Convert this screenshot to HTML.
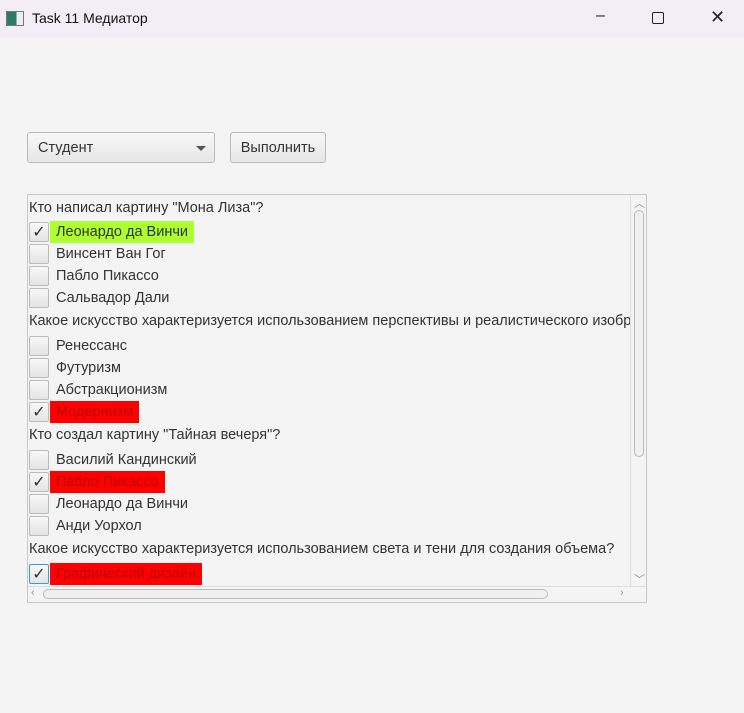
<!DOCTYPE html>
<html><head><meta charset="utf-8"><style>
body{margin:0;width:744px;height:713px;background:#f4f4f4;font-family:"Liberation Sans",sans-serif;position:relative;overflow:hidden;color:#333}
.tb{position:absolute;left:0;top:0;width:744px;height:37px;background:#f3edf7}
.tb .t{position:absolute;left:32px;top:10px;font-size:14px;color:#111}
.ic{position:absolute;left:6px;top:11px;width:16px;height:13px;border:1px solid #777;background:linear-gradient(90deg,#2c7a6a 0 60%,#eee 60%)}
.ctl{position:absolute;top:12px;font-size:16px;color:#222}
.cb{position:absolute;left:27px;top:132px;width:186px;height:29px;border:1px solid #bbb;border-radius:3px;background:linear-gradient(#f8f8f8,#e6e6e6);font-size:14.5px}
.btn{position:absolute;left:230px;top:132px;width:94px;height:29px;border:1px solid #bbb;border-radius:3px;background:linear-gradient(#f8f8f8,#e6e6e6);font-size:14.5px;text-align:center;line-height:30px}
.list{position:absolute;left:27px;top:194px;width:618px;height:407px;border:1px solid #c8c8c8;background:#f4f4f4;overflow:hidden}
.r{position:absolute;left:0;height:22px;font-size:14.5px;line-height:23px;white-space:nowrap}
.q{left:1px}
.chk{position:absolute;left:1px;top:1px;width:18px;height:18px;border:1px solid #bbb;border-radius:2px;background:linear-gradient(#f8f8f8,#e4e4e4);font-size:16px;line-height:19px;text-align:center;color:#333}
.lab{position:absolute;left:22px;top:0;padding:0 6px;height:22px}
.g{background:#adff2f}.rd{background:#ff0000;color:#b00}
.vs{position:absolute;left:602px;top:0;width:16px;height:391px;background:#f4f4f4;border-left:1px solid #ddd}
.vth{position:absolute;left:606px;top:15px;width:8px;height:245px;border:1px solid #bbb;border-radius:5px;background:#f0f0f0}
.hs{position:absolute;left:0;top:391px;width:618px;height:16px;background:#f4f4f4;border-top:1px solid #ddd}
.hth{position:absolute;left:15px;top:394px;width:503px;height:8px;border:1px solid #bbb;border-radius:5px;background:#f0f0f0}
.ar{position:absolute;font-size:11px;color:#999}
</style></head><body>
<div class="tb"><div class="ic"></div><div class="t">Task 11 Медиатор</div>
<div class="ctl" style="left:596px;top:7px">–</div>
<div style="position:absolute;left:652px;top:12px;width:10px;height:10px;border:1px solid #222;border-radius:2px"></div>
<div class="ctl" style="left:710px;top:7px;font-size:18px">✕</div></div>
<div class="cb"><span style="position:absolute;left:10px;top:7px">Студент</span>
<span style="position:absolute;left:168px;top:13px;border-left:5px solid transparent;border-right:5px solid transparent;border-top:5px solid #555"></span></div>
<div class="btn">Выполнить</div>
<div class="list">
<div class="r q" style="top:2px">Кто написал картину "Мона Лиза"?</div>
<div class="r" style="top:26px"><div class="chk">✓</div><div class="lab g">Леонардо да Винчи</div></div>
<div class="r" style="top:48px"><div class="chk"></div><div class="lab">Винсент Ван Гог</div></div>
<div class="r" style="top:70px"><div class="chk"></div><div class="lab">Пабло Пикассо</div></div>
<div class="r" style="top:92px"><div class="chk"></div><div class="lab">Сальвадор Дали</div></div>
<div class="r q" style="top:115px">Какое искусство характеризуется использованием перспективы и реалистического изображения?</div>
<div class="r" style="top:140px"><div class="chk"></div><div class="lab">Ренессанс</div></div>
<div class="r" style="top:162px"><div class="chk"></div><div class="lab">Футуризм</div></div>
<div class="r" style="top:184px"><div class="chk"></div><div class="lab">Абстракционизм</div></div>
<div class="r" style="top:206px"><div class="chk">✓</div><div class="lab rd">Модернизм</div></div>
<div class="r q" style="top:229px">Кто создал картину "Тайная вечеря"?</div>
<div class="r" style="top:254px"><div class="chk"></div><div class="lab">Василий Кандинский</div></div>
<div class="r" style="top:276px"><div class="chk">✓</div><div class="lab rd">Пабло Пикассо</div></div>
<div class="r" style="top:298px"><div class="chk"></div><div class="lab">Леонардо да Винчи</div></div>
<div class="r" style="top:320px"><div class="chk"></div><div class="lab">Анди Уорхол</div></div>
<div class="r q" style="top:343px">Какое искусство характеризуется использованием света и тени для создания объема?</div>
<div class="r" style="top:368px"><div class="chk" style="border-color:#3a9ad9">✓</div><div class="lab rd">Графический дизайн</div></div>
<div class="vs"></div><div class="vth"></div>
<div class="ar" style="left:606px;top:0">︿</div><div class="ar" style="left:606px;top:376px">﹀</div>
<div class="hs"></div><div class="hth"></div>
<div class="ar" style="left:3px;top:392px">‹</div><div class="ar" style="left:592px;top:392px">›</div>
</div>
</body></html>
